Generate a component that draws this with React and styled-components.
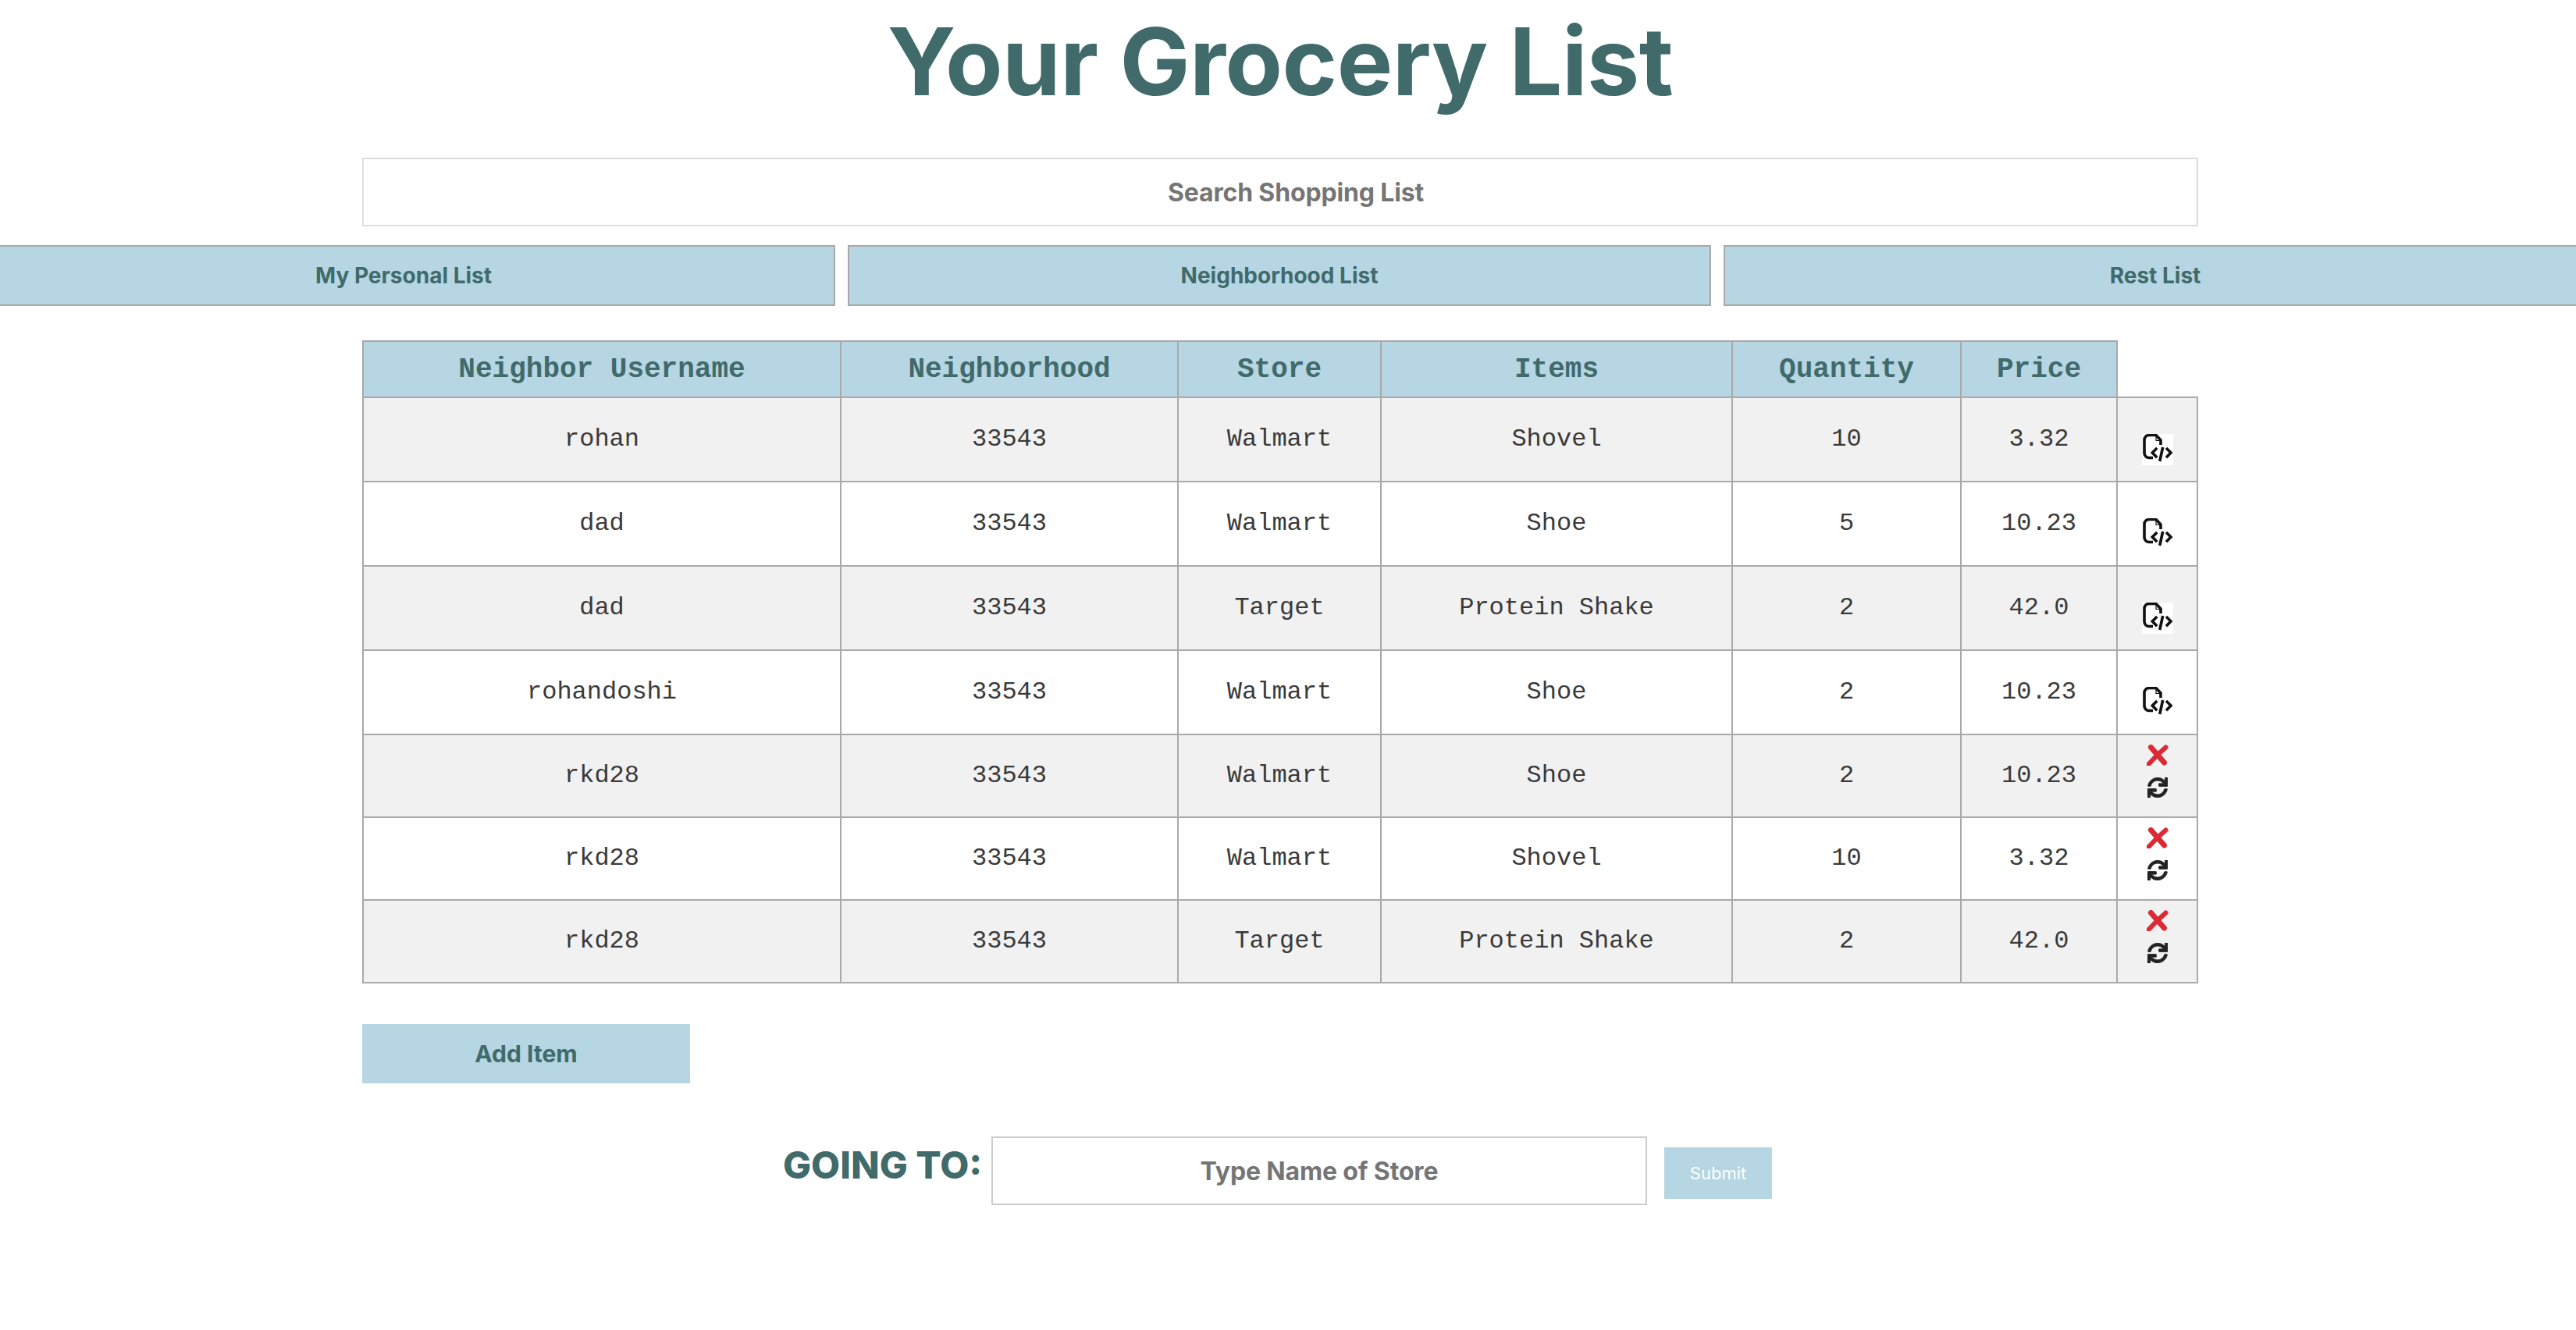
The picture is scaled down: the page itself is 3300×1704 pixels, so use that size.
import React from 'react';
import styled, { createGlobalStyle } from 'styled-components';
import { FaSync } from 'react-icons/fa';

const Global = createGlobalStyle`
  html, body { margin: 0; padding: 0; background: #fff; }
  body { font-family: Inter, "Liberation Sans", sans-serif; }
`;

const TEAL = '#416a6b';
const BLUE = '#b5d6e2';
const LINE = '#a9a9a9';

const Page = styled.div`
  width: 3300px;
  height: 1704px;
  overflow: hidden;
`;
const Title = styled.h1`
  margin: 0 0 0 464px;
  width: 2352px;
  height: 202px;
  text-align: center;
  font-size: 120px;
  line-height: 157px;
  font-weight: 700;
  letter-spacing: -0.5px;
  color: ${TEAL};
`;
const Search = styled.div`
  margin-left: 464px;
  width: 2352px;
  height: 88px;
  box-sizing: border-box;
  border: 2px solid #ddd;
  padding-left: 40px;
  display: flex;
  align-items: center;
  justify-content: center;
  font-size: 32px;
  font-weight: 700;
  letter-spacing: -0.15px;
  color: #757575;
`;
const Tabs = styled.div`
  display: flex;
  gap: 16px;
  margin: 24px 0 0 -36px;
  width: 3350px;
`;
const Tab = styled.div`
  flex: 0 0 1106px;
  height: 78px;
  box-sizing: border-box;
  border: 2px solid ${LINE};
  background: ${BLUE};
  color: ${TEAL};
  display: flex;
  align-items: center;
  justify-content: center;
  font-size: 28px;
  font-weight: 700;
`;
const Table = styled.table`
  margin: 44px 0 0 464px;
  border-collapse: collapse;
  table-layout: fixed;
  width: 2352px;
  font-family: "Liberation Mono", "Courier New", monospace;
`;
const Th = styled.th`
  height: 72px;
  padding: 0;
  box-sizing: border-box;
  border: 2px solid ${LINE};
  background: ${BLUE};
  color: ${TEAL};
  font-size: 36px;
  font-weight: 700;
  text-align: center;
`;
const Row = styled.tr`
  background: ${(p) => (p.$odd ? '#f1f1f1' : '#fff')};
  height: ${(p) => p.$h}px;
`;
const Td = styled.td`
  padding: 0 0 2px;
  box-sizing: border-box;
  border: 2px solid ${LINE};
  color: #3a3a3a;
  font-size: 32px;
  text-align: center;
`;
const ActionTd = styled.td`
  padding: 0;
  border: 2px solid ${LINE};
  vertical-align: top;
`;
const Actions = styled.div`
  display: flex;
  flex-direction: column;
  align-items: center;
  gap: 15px;
  padding-top: ${(p) => p.$top}px;
`;
const DocBox = styled.svg`
  display: block;
  width: 40px;
  height: 40px;
  background: #fff;
`;
const CrossIcon = styled.svg`
  display: block;
  width: 28px;
  height: 27px;
`;
const Add = styled.div`
  margin: 52px 0 0 464px;
  width: 420px;
  height: 76px;
  background: ${BLUE};
  color: ${TEAL};
  display: flex;
  align-items: center;
  justify-content: center;
  font-size: 30px;
  font-weight: 700;
`;
const Going = styled.div`
  display: flex;
  align-items: flex-start;
  margin: 68px 0 0 1003px;
`;
const GoingLabel = styled.div`
  font-size: 48px;
  font-weight: 800;
  line-height: 58px;
  color: ${TEAL};
  width: 267px;
  white-space: nowrap;
  padding-top: 8px;
`;
const StoreInput = styled.div`
  width: 840px;
  height: 88px;
  box-sizing: border-box;
  border: 2px solid #ccc;
  display: flex;
  align-items: center;
  justify-content: center;
  font-size: 32px;
  font-weight: 700;
  letter-spacing: -0.15px;
  color: #757575;
`;
const Submit = styled.div`
  margin: 14px 0 0 22px;
  width: 138px;
  height: 66px;
  background: ${BLUE};
  color: #fff;
  display: flex;
  align-items: center;
  justify-content: center;
  font-size: 22px;
`;

const DocCode = () => (
  <DocBox viewBox="0 0 40 40" fill="none" stroke="#111" strokeWidth="3.6">
    <path d="M14 30.5H9a6 6 0 0 1-6-6V7.5a6 6 0 0 1 6-6h9l6 6.5v6" strokeLinejoin="round" />
    <path d="M18 2v6.5h6" strokeWidth="1.2" />
    <path d="M19.3 18l-6 6 6 6.3M31 18l6 6-6 6.3" />
    <path d="M26.7 17l-4 18" />
  </DocBox>
);
const Cross = () => (
  <CrossIcon viewBox="0 0 28 27" fill="none" stroke="#dc2a35" strokeLinecap="round">
    <path d="M5.5 3.5l17 19.5" strokeWidth="7" />
    <path d="M24.5 3.5L14 13 2.5 25" strokeWidth="6" />
  </CrossIcon>
);

const rows = [
  ['rohan', '33543', 'Walmart', 'Shovel', '10', '3.32', 0],
  ['dad', '33543', 'Walmart', 'Shoe', '5', '10.23', 0],
  ['dad', '33543', 'Target', 'Protein Shake', '2', '42.0', 0],
  ['rohandoshi', '33543', 'Walmart', 'Shoe', '2', '10.23', 0],
  ['rkd28', '33543', 'Walmart', 'Shoe', '2', '10.23', 1],
  ['rkd28', '33543', 'Walmart', 'Shovel', '10', '3.32', 1],
  ['rkd28', '33543', 'Target', 'Protein Shake', '2', '42.0', 1],
];
const cols = [612, 432, 260, 450, 293, 200, 103];
const heads = ['Neighbor Username', 'Neighborhood', 'Store', 'Items', 'Quantity', 'Price'];

export default function App() {
  return (
    <Page>
      <Global />
      <Title>Your Grocery List</Title>
      <Search>Search Shopping List</Search>
      <Tabs>
        <Tab>My Personal List</Tab>
        <Tab>Neighborhood List</Tab>
        <Tab>Rest List</Tab>
      </Tabs>
      <Table>
        <colgroup>
          {cols.map((w, i) => <col key={i} width={w} />)}
        </colgroup>
        <thead>
          <tr>{heads.map((h) => <Th key={h}>{h}</Th>)}</tr>
        </thead>
        <tbody>
          {rows.map((r, i) => (
            <Row key={i} $odd={i % 2 === 0} $h={r[6] ? 106 : 108}>
              {r.slice(0, 6).map((c, j) => <Td key={j}>{c}</Td>)}
              <ActionTd>
                {r[6] ? (
                  <Actions $top={12}>
                    <Cross />
                    <FaSync size={26} color="#222" stroke="#222" strokeWidth={18} />
                  </Actions>
                ) : (
                  <Actions $top={46}>
                    <DocCode />
                  </Actions>
                )}
              </ActionTd>
            </Row>
          ))}
        </tbody>
      </Table>
      <Add>Add Item</Add>
      <Going>
        <GoingLabel>GOING TO:</GoingLabel>
        <StoreInput>Type Name of Store</StoreInput>
        <Submit>Submit</Submit>
      </Going>
    </Page>
  );
}
